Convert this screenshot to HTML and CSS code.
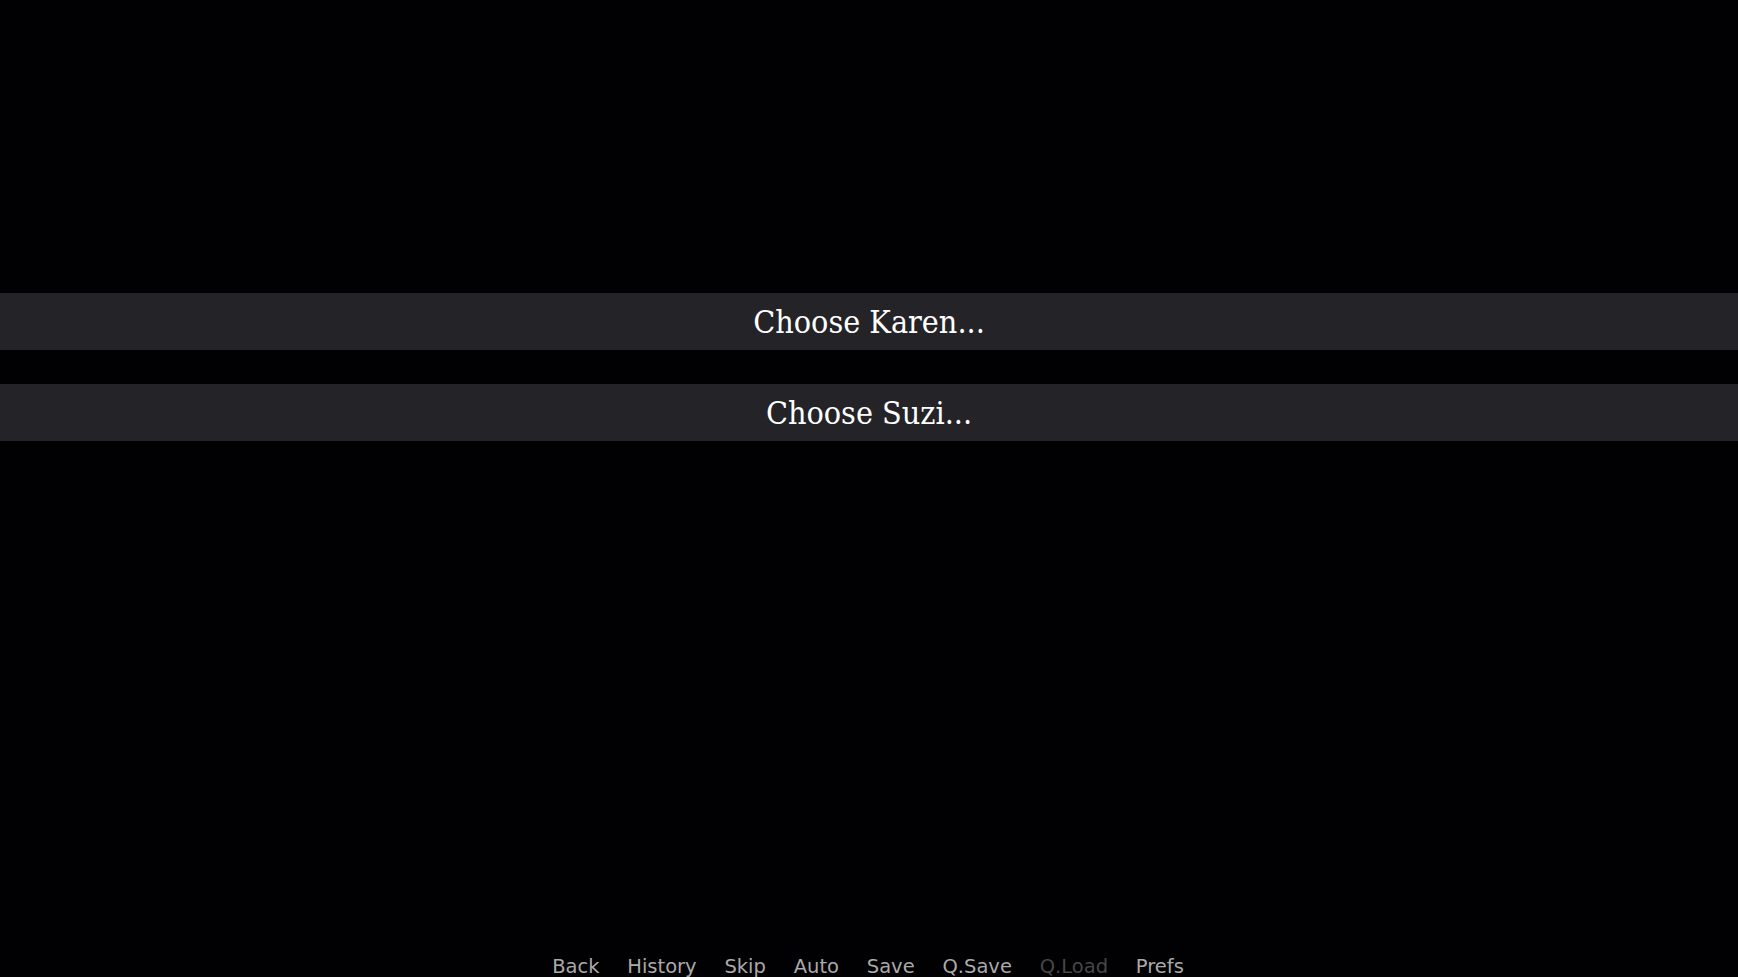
FILE: index.html
```html
<!DOCTYPE html>
<html lang="en">
<head>
<meta charset="utf-8">
<title>Choice</title>
<link rel="stylesheet" href="styles.css">
</head>
<body>
<div class="screen">
  <div class="choices">
    <div class="choice"><span class="choice-text">Choose Karen...</span></div>
    <div class="choice"><span class="choice-text">Choose Suzi...</span></div>
  </div>
  <nav class="quick">
    <span class="qbtn">Back</span>
    <span class="qbtn">History</span>
    <span class="qbtn">Skip</span>
    <span class="qbtn">Auto</span>
    <span class="qbtn">Save</span>
    <span class="qbtn">Q.Save</span>
    <span class="qbtn disabled">Q.Load</span>
    <span class="qbtn">Prefs</span>
  </nav>
</div>
</body>
</html>
```
FILE: styles.css
```css
html, body {
  margin: 0;
  padding: 0;
  background: #000000;
}
.screen {
  width: 1738px;
  height: 977px;
  overflow: hidden;
  display: flex;
  flex-direction: column;
  background: #010002;
}
.choices {
  display: flex;
  flex-direction: column;
  gap: 34px;
  padding-top: 293px;
}
.choice {
  height: 57px;
  background: #242327;
  display: flex;
  align-items: center;
  justify-content: center;
}
.choice-text {
  font-family: "DejaVu Serif", "Liberation Serif", serif;
  font-stretch: semi-condensed;
  font-size: 32px;
  line-height: 1;
  color: #ffffff;
}
.quick {
  margin-top: auto;
  display: flex;
  justify-content: center;
  gap: 27.8px;
  padding-right: 2px;
}
.qbtn {
  font-family: "DejaVu Sans", sans-serif;
  font-size: 19.5px;
  line-height: 20px;
  color: #aaaaaa;
}
.qbtn.disabled {
  color: #474747;
}
```
